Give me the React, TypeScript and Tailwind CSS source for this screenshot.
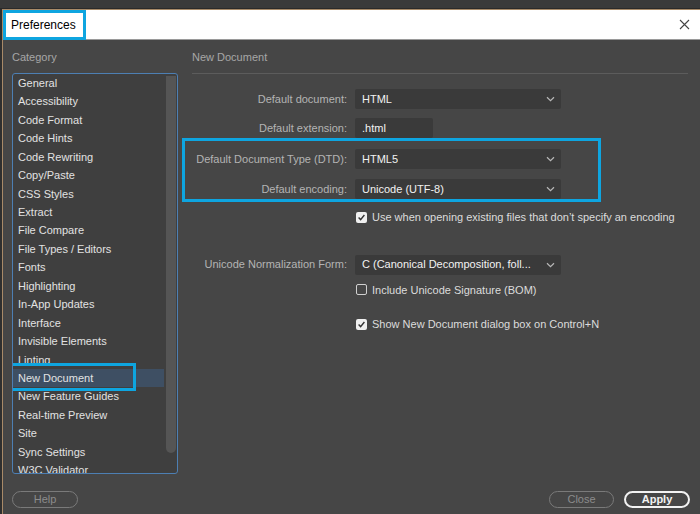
import React from 'react';

const categories = [
  'General',
  'Accessibility',
  'Code Format',
  'Code Hints',
  'Code Rewriting',
  'Copy/Paste',
  'CSS Styles',
  'Extract',
  'File Compare',
  'File Types / Editors',
  'Fonts',
  'Highlighting',
  'In-App Updates',
  'Interface',
  'Invisible Elements',
  'Linting',
  'New Document',
  'New Feature Guides',
  'Real-time Preview',
  'Site',
  'Sync Settings',
  'W3C Validator',
];

function Chevron() {
  return (
    <svg width="9" height="6" viewBox="0 0 9 6" className="shrink-0">
      <path d="M1 1.2 L4.5 4.6 L8 1.2" fill="none" stroke="#b8b8b8" strokeWidth="1.2" />
    </svg>
  );
}

function Select({ value, width = 'w-[206px]' }: { value: string; width?: string }) {
  return (
    <div className={`${width} h-[20px] bg-[#3a3a3a] rounded-[2px] flex items-center justify-between pl-[7px] pr-[6px]`}>
      <span className="text-[#f2f2f2] text-[11px] font-medium truncate">{value}</span>
      <Chevron />
    </div>
  );
}

function Row({ label, children }: { label: string; children: React.ReactNode }) {
  return (
    <div className="flex items-center">
      <div className="w-[157px] text-right text-[11px] text-[#b4b4b4] pr-[2px]">{label}</div>
      <div className="ml-[6px]">{children}</div>
    </div>
  );
}

function Checkbox({ checked, label }: { checked: boolean; label: string }) {
  return (
    <div className="flex items-center gap-[5px] ml-[164px]">
      {checked ? (
        <div className="w-[11px] h-[11px] rounded-[2px] bg-[#f0f0f0] flex items-center justify-center">
          <svg width="9" height="9" viewBox="0 0 9 9">
            <path d="M1.6 4.6 L3.6 6.6 L7.4 2" fill="none" stroke="#333" strokeWidth="1.4" />
          </svg>
        </div>
      ) : (
        <div className="w-[11px] h-[11px] rounded-[2px] border border-[#d0d0d0]" />
      )}
      <span className="text-[11px] text-[#dcdcdc]">{label}</span>
    </div>
  );
}

export default function App() {
  return (
    <div
      className="w-[700px] h-[514px] bg-[#333333] flex flex-col overflow-hidden"
      style={{ fontFamily: '"Liberation Sans", Arial, sans-serif' }}
    >
      {/* taskbar strip above the dialog */}
      <div className="h-[9px] bg-[#3a3a3a] border-b border-[#2a2a2a] shrink-0" />
      <div className="flex flex-1 min-h-0">
        <div className="w-[2px] bg-[#2f2f2f] shrink-0" />
        <div className="flex-1 flex flex-col border-l border-t border-[#a88a68] bg-[#464646]">
          {/* title bar */}
          <div className="h-[30px] bg-white border-b border-[#9a9a9a] flex items-center justify-between shrink-0">
            <span className="h-[30px] pl-[5px] pr-[7px] border-[3px] border-[#0ea5e0] flex items-center text-[12px] text-black">
              Preferences
            </span>
            <svg width="11" height="11" viewBox="0 0 11 11" className="mr-[10px]">
              <path d="M1 1 L10 10 M10 1 L1 10" stroke="#444" strokeWidth="1.1" />
            </svg>
          </div>

          {/* body */}
          <div className="flex-1 flex flex-col px-[9px] pb-[6px] min-h-0">
            <div className="flex flex-1 min-h-0">
              {/* category column */}
              <div className="w-[166px] flex flex-col">
                <div className="text-[11px] text-[#a6a6a6] mt-[10px] h-[14px] leading-[14px]">Category</div>
                <div className="mt-[9px] h-[401px] border border-[#4d7fb3] rounded-[3px] bg-[#3f3f3f] flex overflow-hidden">
                  <div className="flex-1 flex flex-col">
                    {categories.map((c) => (
                      <div
                        key={c}
                        className={`relative h-[18.45px] shrink-0 flex items-center pl-[5px] text-[11px] text-[#e2e2e2] ${
                          c === 'New Document' ? 'bg-[#3e4f63]' : ''
                        }`}
                      >
                        {c}
                        {c === 'New Document' && (
                          <div className="absolute left-[-5px] top-[-6px] w-[128px] h-[28px] border-[3px] border-[#0ea5e0]" />
                        )}
                      </div>
                    ))}
                  </div>
                  <div className="w-[13px] flex justify-center pt-[2px]">
                    <div className="w-[10px] h-[377px] rounded-b-[5px] bg-[#555555]" />
                  </div>
                </div>
              </div>

              {/* settings column */}
              <div className="flex-1 ml-[14px] flex flex-col">
                <div className="text-[11px] text-[#a6a6a6] mt-[10px] h-[14px] leading-[14px]">New Document</div>
                <div className="mt-[9px] h-[1px] bg-[#5c5c5c] mr-[3px]" />

                <div className="mt-[15px]">
                  <Row label="Default document:">
                    <Select value="HTML" />
                  </Row>
                </div>
                <div className="mt-[9px]">
                  <Row label="Default extension:">
                    <div className="w-[78px] h-[20px] bg-[#3a3a3a] rounded-[2px] flex items-center pl-[7px] text-[11px] text-[#f2f2f2] font-medium">
                      .html
                    </div>
                  </Row>
                </div>

                <div className="ml-[-10px] w-[419px] h-[64px] border-[3px] border-[#0ea5e0] pl-[7px] pt-[8px] flex flex-col gap-[10px]">
                  <Row label="Default Document Type (DTD):">
                    <Select value="HTML5" />
                  </Row>
                  <Row label="Default encoding:">
                    <Select value="Unicode (UTF-8)" />
                  </Row>
                </div>

                <div className="mt-[7px]">
                  <Checkbox checked label="Use when opening existing files that don’t specify an encoding" />
                </div>

                <div className="mt-[29px]">
                  <Row label="Unicode Normalization Form:">
                    <Select value="C (Canonical Decomposition, foll..." />
                  </Row>
                </div>
                <div className="mt-[7px]">
                  <Checkbox checked={false} label="Include Unicode Signature (BOM)" />
                </div>
                <div className="mt-[18px]">
                  <Checkbox checked label="Show New Document dialog box on Control+N" />
                </div>
              </div>
            </div>

            {/* footer buttons */}
            <div className="flex items-center justify-between mt-[15px]">
              <button className="w-[66px] h-[17px] rounded-full border border-[#7a7a7a] text-[11px] text-[#8c8c8c] flex items-center justify-center">
                Help
              </button>
              <div className="flex gap-[10px] mr-[1px]">
                <button className="w-[65px] h-[17px] rounded-full border border-[#7a7a7a] text-[11px] text-[#8c8c8c] flex items-center justify-center">
                  Close
                </button>
                <button className="w-[66px] h-[17px] rounded-full border-2 border-[#f2f2f2] text-[11px] font-bold text-[#f2f2f2] flex items-center justify-center">
                  Apply
                </button>
              </div>
            </div>
          </div>
        </div>
      </div>
    </div>
  );
}
